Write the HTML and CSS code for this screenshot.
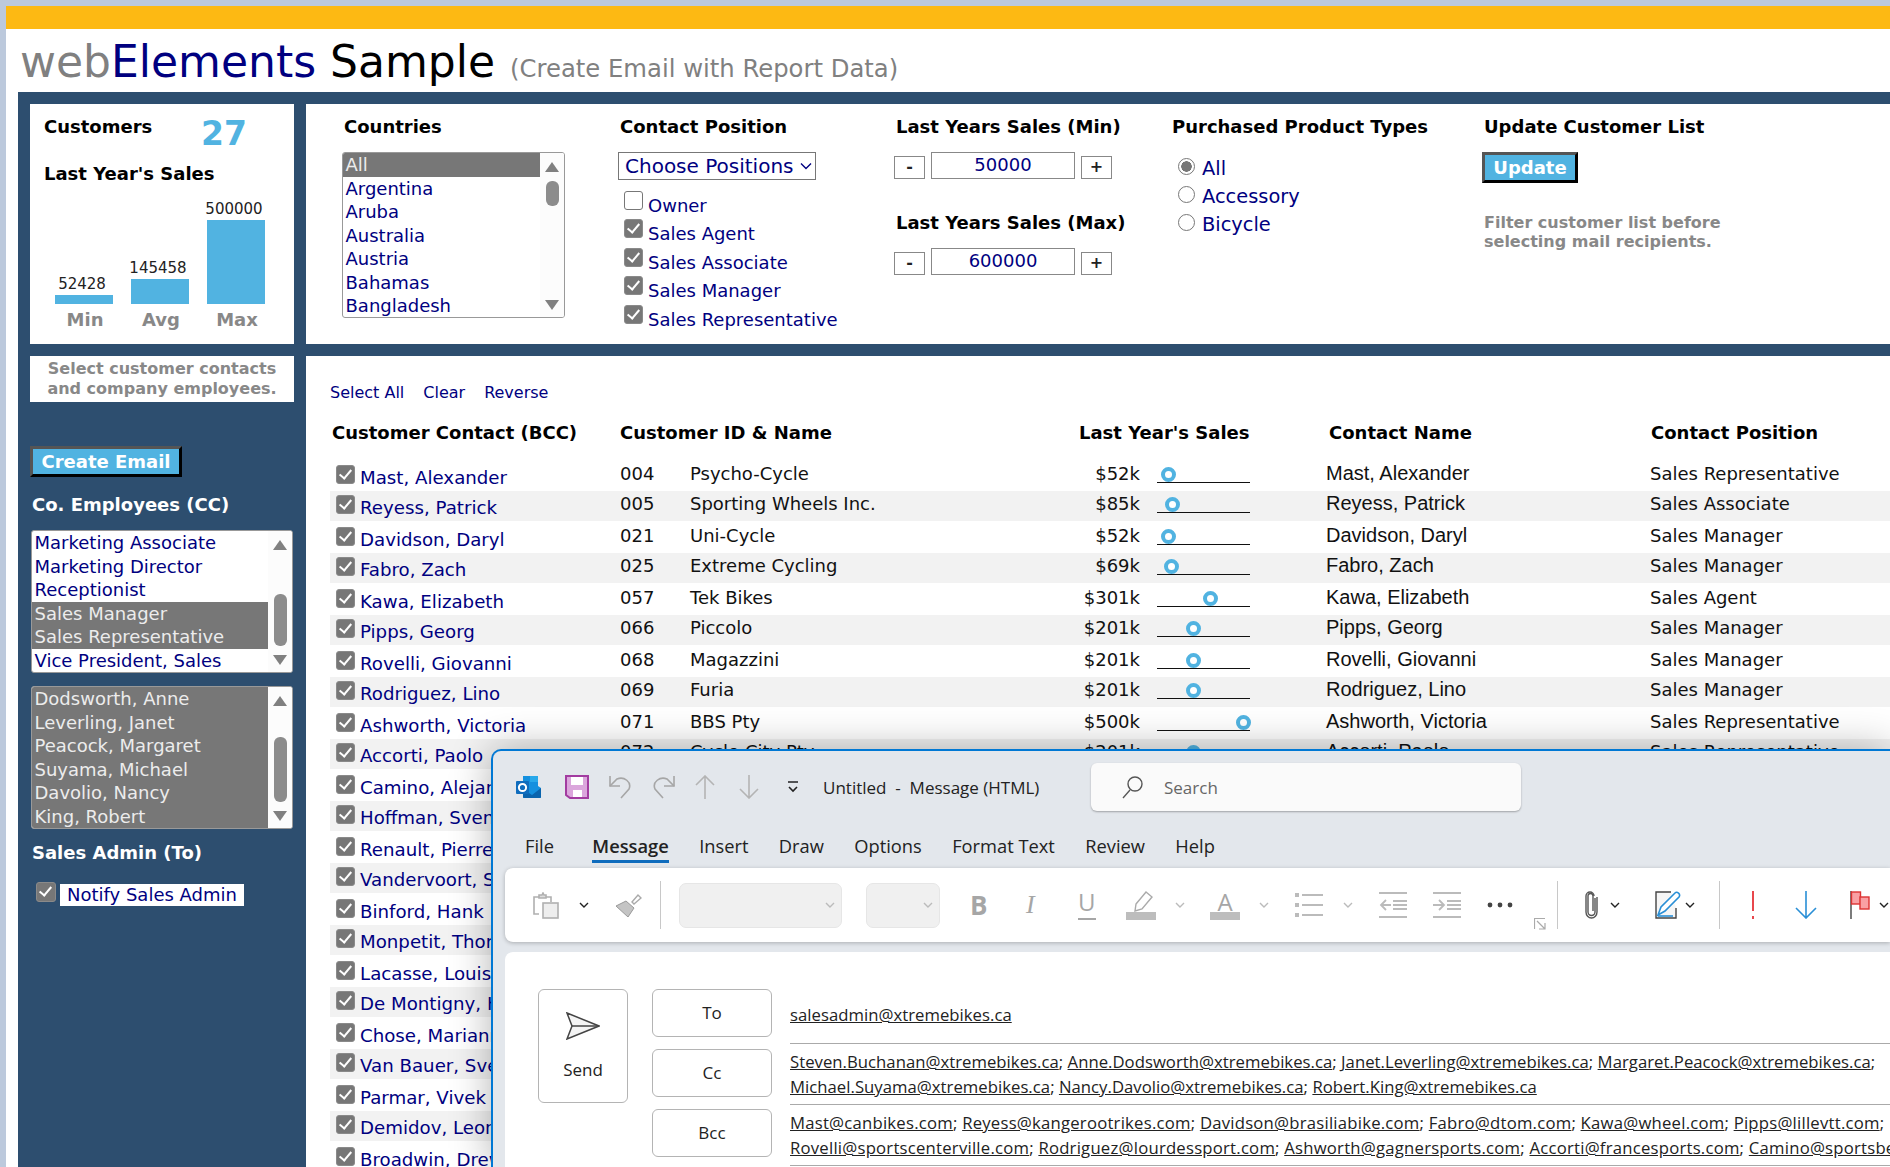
FILE: index.html
```html
<!DOCTYPE html>
<html lang="en">

<head>
  <meta charset="UTF-8">
  <title>webElements Sample</title>
  <link rel="stylesheet" href="styles.css">
</head>

<body>
  <div class="page">
    <div class="topbar"></div>
    <div class="title-row">
      <h1 class="title"><span class="t-grey">web</span><span class="t-navy">Elements</span> Sample</h1>
      <span class="subtitle">(Create Email with Report Data)</span>
    </div>

    <div class="panel">
      <div class="card summary">
        <div class="summary-top">
          <h2 class="hd hd-cust">Customers</h2>
          <div class="big-num">27</div>
        </div>
        <h2 class="hd hd-sales">Last Year's Sales</h2>
        <div class="chart">
          <div class="col"><div class="val">52428</div><div class="bar bar-min"></div><div class="lab">Min</div></div>
          <div class="col"><div class="val">145458</div><div class="bar bar-avg"></div><div class="lab">Avg</div></div>
          <div class="col"><div class="val">500000</div><div class="bar bar-max"></div><div class="lab">Max</div></div>
        </div>
      </div>

      <div class="card filters">
        <div class="f-col">
          <h2 class="hd hd-in">Countries</h2>
          <div class="listbox lb-countries">
            <div class="opts">
              <div class="opt sel">All</div>
              <div class="opt">Argentina</div>
              <div class="opt">Aruba</div>
              <div class="opt">Australia</div>
              <div class="opt">Austria</div>
              <div class="opt">Bahamas</div>
              <div class="opt">Bangladesh</div>
            </div>
            <div class="scroll"><i class="arr-up"></i><i class="thumb thumb-a"></i><i class="arr-down"></i></div>
          </div>
        </div>
        <div class="f-col">
          <h2 class="hd hd-in">Contact Position</h2>
          <div class="dropdown">Choose Positions
            <svg width="12" height="8" viewBox="0 0 12 8"><path d="M1 1.5l5 5 5-5" fill="none" stroke="#000080" stroke-width="1.4"/></svg>
          </div>
          <div class="checks">
            <label class="chk-row"><input type="checkbox" class="box"><span>Owner</span></label>
            <label class="chk-row"><input type="checkbox" class="box" checked><span>Sales Agent</span></label>
            <label class="chk-row"><input type="checkbox" class="box" checked><span>Sales Associate</span></label>
            <label class="chk-row"><input type="checkbox" class="box" checked><span>Sales Manager</span></label>
            <label class="chk-row"><input type="checkbox" class="box" checked><span>Sales Representative</span></label>
          </div>
        </div>
        <div class="f-col">
          <h2 class="hd hd-in">Last Years Sales (Min)</h2>
          <div class="stepper"><div class="st-btn">-</div><div class="st-val">50000</div><div class="st-btn">+</div></div>
          <h2 class="hd hd-in hd-max">Last Years Sales (Max)</h2>
          <div class="stepper"><div class="st-btn">-</div><div class="st-val">600000</div><div class="st-btn">+</div></div>
        </div>
        <div class="f-col">
          <h2 class="hd">Purchased Product Types</h2>
          <div class="radios">
            <label class="rad-row"><input type="radio" name="ptype" class="rad" checked><span>All</span></label>
            <label class="rad-row"><input type="radio" name="ptype" class="rad"><span>Accessory</span></label>
            <label class="rad-row"><input type="radio" name="ptype" class="rad"><span>Bicycle</span></label>
          </div>
        </div>
        <div class="f-col">
          <h2 class="hd hd-in">Update Customer List</h2>
          <div class="btn btn-update">Update</div>
          <p class="hint">Filter customer list before<br>selecting mail recipients.</p>
        </div>
      </div>

      <div class="sidebar">
        <p class="note">Select customer contacts<br>and company employees.</p>
        <div class="btn btn-create">Create Email</div>
        <h2 class="hd hd-white hd-emp">Co. Employees (CC)</h2>
        <div class="listbox lb-side">
          <div class="opts">
            <div class="opt">Marketing Associate</div>
            <div class="opt">Marketing Director</div>
            <div class="opt">Receptionist</div>
            <div class="opt sel">Sales Manager</div>
            <div class="opt sel">Sales Representative</div>
            <div class="opt">Vice President, Sales</div>
          </div>
          <div class="scroll"><i class="arr-up"></i><i class="thumb thumb-b"></i><i class="arr-down"></i></div>
        </div>
        <div class="listbox lb-side lb-second">
          <div class="opts">
            <div class="opt sel">Dodsworth, Anne</div>
            <div class="opt sel">Leverling, Janet</div>
            <div class="opt sel">Peacock, Margaret</div>
            <div class="opt sel">Suyama, Michael</div>
            <div class="opt sel">Davolio, Nancy</div>
            <div class="opt sel">King, Robert</div>
          </div>
          <div class="scroll"><i class="arr-up"></i><i class="thumb thumb-c"></i><i class="arr-down"></i></div>
        </div>
        <h2 class="hd hd-white hd-admin">Sales Admin (To)</h2>
        <label class="notify"><input type="checkbox" class="box" checked><span>Notify Sales Admin</span></label>
      </div>

      <div class="main">
        <div class="links"><a>Select All</a><a>Clear</a><a>Reverse</a></div>
        <div class="thead">
          <h2 class="hd">Customer Contact (BCC)</h2>
          <h2 class="hd">Customer ID &amp; Name</h2>
          <h2 class="hd">Last Year's Sales</h2>
          <h2 class="hd">Contact Name</h2>
          <h2 class="hd">Contact Position</h2>
        </div>
        <div id="list">
          <div class="row"><input type="checkbox" class="box" checked><div class="c-name">Mast, Alexander</div><div>004</div><div>Psycho-Cycle</div><div class="c-sales">$52k</div><div class="slider"><i style="left:3.5px"></i></div><div class="c-contact">Mast, Alexander</div><div>Sales Representative</div></div>
          <div class="row"><input type="checkbox" class="box" checked><div class="c-name">Reyess, Patrick</div><div>005</div><div>Sporting Wheels Inc.</div><div class="c-sales">$85k</div><div class="slider"><i style="left:7.5px"></i></div><div class="c-contact">Reyess, Patrick</div><div>Sales Associate</div></div>
          <div class="row"><input type="checkbox" class="box" checked><div class="c-name">Davidson, Daryl</div><div>021</div><div>Uni-Cycle</div><div class="c-sales">$52k</div><div class="slider"><i style="left:3.5px"></i></div><div class="c-contact">Davidson, Daryl</div><div>Sales Manager</div></div>
          <div class="row"><input type="checkbox" class="box" checked><div class="c-name">Fabro, Zach</div><div>025</div><div>Extreme Cycling</div><div class="c-sales">$69k</div><div class="slider"><i style="left:6.5px"></i></div><div class="c-contact">Fabro, Zach</div><div>Sales Manager</div></div>
          <div class="row"><input type="checkbox" class="box" checked><div class="c-name">Kawa, Elizabeth</div><div>057</div><div>Tek Bikes</div><div class="c-sales">$301k</div><div class="slider"><i style="left:45.5px"></i></div><div class="c-contact">Kawa, Elizabeth</div><div>Sales Agent</div></div>
          <div class="row"><input type="checkbox" class="box" checked><div class="c-name">Pipps, Georg</div><div>066</div><div>Piccolo</div><div class="c-sales">$201k</div><div class="slider"><i style="left:29px"></i></div><div class="c-contact">Pipps, Georg</div><div>Sales Manager</div></div>
          <div class="row"><input type="checkbox" class="box" checked><div class="c-name">Rovelli, Giovanni</div><div>068</div><div>Magazzini</div><div class="c-sales">$201k</div><div class="slider"><i style="left:29px"></i></div><div class="c-contact">Rovelli, Giovanni</div><div>Sales Manager</div></div>
          <div class="row"><input type="checkbox" class="box" checked><div class="c-name">Rodriguez, Lino</div><div>069</div><div>Furia</div><div class="c-sales">$201k</div><div class="slider"><i style="left:29px"></i></div><div class="c-contact">Rodriguez, Lino</div><div>Sales Manager</div></div>
          <div class="row"><input type="checkbox" class="box" checked><div class="c-name">Ashworth, Victoria</div><div>071</div><div>BBS Pty</div><div class="c-sales">$500k</div><div class="slider"><i style="left:78.5px"></i></div><div class="c-contact">Ashworth, Victoria</div><div>Sales Representative</div></div>
          <div class="row"><input type="checkbox" class="box" checked><div class="c-name">Accorti, Paolo</div><div>072</div><div>Cycle City Pty</div><div class="c-sales">$201k</div><div class="slider"><i style="left:29px"></i></div><div class="c-contact">Accorti, Paolo</div><div>Sales Representative</div></div>
          <div class="row"><input type="checkbox" class="box" checked><div class="c-name">Camino, Alejandra</div></div>
          <div class="row"><input type="checkbox" class="box" checked><div class="c-name">Hoffman, Sven</div></div>
          <div class="row"><input type="checkbox" class="box" checked><div class="c-name">Renault, Pierre</div></div>
          <div class="row"><input type="checkbox" class="box" checked><div class="c-name">Vandervoort, Sam</div></div>
          <div class="row"><input type="checkbox" class="box" checked><div class="c-name">Binford, Hank</div></div>
          <div class="row"><input type="checkbox" class="box" checked><div class="c-name">Monpetit, Thomas</div></div>
          <div class="row"><input type="checkbox" class="box" checked><div class="c-name">Lacasse, Louis</div></div>
          <div class="row"><input type="checkbox" class="box" checked><div class="c-name">De Montigny, Henri</div></div>
          <div class="row"><input type="checkbox" class="box" checked><div class="c-name">Chose, Marianne</div></div>
          <div class="row"><input type="checkbox" class="box" checked><div class="c-name">Van Bauer, Sven</div></div>
          <div class="row"><input type="checkbox" class="box" checked><div class="c-name">Parmar, Vivek</div></div>
          <div class="row"><input type="checkbox" class="box" checked><div class="c-name">Demidov, Leon</div></div>
          <div class="row"><input type="checkbox" class="box" checked><div class="c-name">Broadwin, Drew</div></div>
        </div>
      </div>
    </div>
  </div>

  <!-- mail window sits on top of the page -->
  <div class="mail">
    <div class="titlebar">
      <svg class="ic-logo" width="25" height="24" viewBox="0 0 25 24"><path d="M7 1h14a1 1 0 0 1 1 1v9l3 2v9a1 1 0 0 1-1 1H8a1 1 0 0 1-1-1z" fill="#1490df"/><path d="M14 1h8v6h-8z" fill="#28a8ea"/><path d="M7 14l9 6 9-7v9a1 1 0 0 1-1 1H8a1 1 0 0 1-1-1z" fill="#0a64ad"/><rect x="0" y="6" width="13" height="13" rx="1" fill="#0f6cbd"/><circle cx="6.5" cy="12.5" r="3.6" fill="none" stroke="#fff" stroke-width="2"/></svg>
      <svg class="ic-save" width="24" height="24" viewBox="0 0 24 24"><path d="M1 1h22v22H5l-4-3z" fill="#dba6dc" stroke="#a23ca0" stroke-width="2"/><rect x="6" y="2" width="12" height="8" fill="#fff"/><rect x="8" y="15" width="9" height="7" fill="#fff"/></svg>
      <svg class="ic-undo" width="24" height="24" viewBox="0 0 24 24" fill="none" stroke="#a6a6a6" stroke-width="1.6"><path d="M2 1v10h10"/><path d="M2 11L9 4c7-3 15 3 12 10l-8 9"/></svg>
      <svg class="ic-redo" width="24" height="24" viewBox="0 0 24 24" fill="none" stroke="#a6a6a6" stroke-width="1.6"><path d="M22 1v10H12"/><path d="M22 11l-7-7C8 1 0 7 3 14l8 9"/></svg>
      <svg class="ic-up" width="24" height="24" viewBox="0 0 24 24" fill="none" stroke="#b4b4b4" stroke-width="1.6"><path d="M12 24V1M3 10l9-9 9 9"/></svg>
      <svg class="ic-down" width="24" height="24" viewBox="0 0 24 24" fill="none" stroke="#b4b4b4" stroke-width="1.6"><path d="M12 0v23M3 14l9 9 9-9"/></svg>
      <svg class="ic-more" width="14" height="14" viewBox="0 0 14 14" fill="none" stroke="#222" stroke-width="1.6"><path d="M2 2h10M3 7l4 4 4-4"/></svg>
      <div class="win-title">Untitled  -  Message (HTML)</div>
      <div class="search">
        <svg width="22" height="24" viewBox="0 0 22 24" fill="none" stroke="#555" stroke-width="1.4"><circle cx="13" cy="9" r="7"/><path d="M8 15l-7 8"/></svg>
        <span>Search</span>
      </div>
    </div>

    <div class="tabs">
      <span class="tab">File</span>
      <span class="tab active">Message</span>
      <span class="tab">Insert</span>
      <span class="tab">Draw</span>
      <span class="tab">Options</span>
      <span class="tab">Format Text</span>
      <span class="tab">Review</span>
      <span class="tab">Help</span>
    </div>

    <div class="ribbon">
      <svg width="26" height="27" viewBox="0 0 26 27" fill="none" stroke="#b0b0b0" stroke-width="1.6"><path d="M6 22H1V5h5M13 5h5v5"/><path d="M6 6V3h3l1-2 1 2h2v3z" fill="#ddd"/><rect x="10" y="11" width="15" height="15" fill="#eee"/></svg>
      <svg class="chev" width="10" height="7" viewBox="0 0 10 7"><path d="M1 1l4 4 4-4" fill="none" stroke="#222" stroke-width="1.4"/></svg>
      <svg width="27" height="24" viewBox="0 0 27 24"><path d="M17 9l6-7 3 3-7 6z" fill="none" stroke="#aaa" stroke-width="1.4"/><path d="M1 13l10-5 8 7-6 9z" fill="#c4c4c4" stroke="#999"/></svg>
      <div class="rb-sep"></div>
      <div class="rb-field rb-font"><svg class="chev" width="10" height="7" viewBox="0 0 10 7"><path d="M1 1l4 4 4-4" fill="none" stroke="#bbb" stroke-width="1.4"/></svg></div>
      <div class="rb-field rb-size"><svg class="chev" width="10" height="7" viewBox="0 0 10 7"><path d="M1 1l4 4 4-4" fill="none" stroke="#bbb" stroke-width="1.4"/></svg></div>
      <span class="gl gl-b">B</span>
      <span class="gl gl-i">I</span>
      <span class="gl gl-u">U</span>
      <svg width="30" height="29" viewBox="0 0 30 29"><path d="M10 13L20 1l6 5-10 12-7 2z" fill="none" stroke="#aaa" stroke-width="1.4"/><rect y="21" width="30" height="8" fill="#bdbdbd"/></svg>
      <svg class="chev" width="10" height="7" viewBox="0 0 10 7"><path d="M1 1l4 4 4-4" fill="none" stroke="#bbb" stroke-width="1.4"/></svg>
      <span class="gl gl-a">A</span>
      <svg class="chev" width="10" height="7" viewBox="0 0 10 7"><path d="M1 1l4 4 4-4" fill="none" stroke="#bbb" stroke-width="1.4"/></svg>
      <svg width="28" height="24" viewBox="0 0 28 24" fill="#bbb"><rect width="4" height="4"/><rect y="10" width="4" height="4"/><rect y="20" width="4" height="4"/><rect x="7" y="1" width="21" height="2"/><rect x="7" y="11" width="21" height="2"/><rect x="7" y="21" width="21" height="2"/></svg>
      <svg class="chev" width="10" height="7" viewBox="0 0 10 7"><path d="M1 1l4 4 4-4" fill="none" stroke="#bbb" stroke-width="1.4"/></svg>
      <svg width="28" height="26" viewBox="0 0 28 26" fill="none" stroke="#bbb" stroke-width="1.8"><path d="M0 1h28M14 9h14M14 13h14M14 17h14M0 25h28M12 13H2M7 8l-5 5 5 5"/></svg>
      <svg width="28" height="26" viewBox="0 0 28 26" fill="none" stroke="#bbb" stroke-width="1.8"><path d="M0 1h28M14 9h14M14 13h14M14 17h14M0 25h28M0 13h10M6 8l5 5-5 5"/></svg>
      <svg width="26" height="6" viewBox="0 0 26 6" fill="#444"><circle cx="3" cy="3" r="2.4"/><circle cx="13" cy="3" r="2.4"/><circle cx="23" cy="3" r="2.4"/></svg>
      <div class="rb-sep"></div>
      <svg width="13" height="28" viewBox="0 0 13 28" fill="none" stroke="#555" stroke-width="1.4"><path d="M10 7v14a3.5 3.5 0 0 1-7 0V5a2.5 2.5 0 0 1 5 0v15"/><path d="M12 6v15a5.5 6 0 0 1-11 0V5a4 4 0 0 1 8 0"/></svg>
      <svg class="chev" width="10" height="7" viewBox="0 0 10 7"><path d="M1 1l4 4 4-4" fill="none" stroke="#222" stroke-width="1.4"/></svg>
      <svg width="27" height="28" viewBox="0 0 27 28"><path d="M21 17v10H1V1h15" fill="#f6f6f6" stroke="#444" stroke-width="1.4"/><path d="M3 24l3-8L20 2c2-2 6 1 4 4L10 20z" fill="#fff" stroke="#2a8fd6" stroke-width="1.6"/><path d="M3 25h15" stroke="#2a8fd6" stroke-width="1.6"/></svg>
      <svg class="chev" width="10" height="7" viewBox="0 0 10 7"><path d="M1 1l4 4 4-4" fill="none" stroke="#222" stroke-width="1.4"/></svg>
      <div class="rb-sep"></div>
      <svg class="ic-excl" width="4" height="28" viewBox="0 0 4 28" fill="#e8474c"><rect x="1" width="2" height="20"/><rect x="1" y="25" width="2" height="3"/></svg>
      <svg width="22" height="28" viewBox="0 0 22 28" fill="none" stroke="#2a8fd6" stroke-width="1.6"><path d="M11 0v27M1 17l10 10 10-10"/></svg>
      <svg width="20" height="28" viewBox="0 0 20 28"><path d="M1 0v28" stroke="#444" stroke-width="1.4"/><rect x="1.5" y="1" width="9" height="12" fill="#f9a0a4" stroke="#d33" stroke-width="1.4"/><rect x="10" y="6" width="9" height="12" fill="#f9a0a4" stroke="#d33" stroke-width="1.4"/></svg>
      <svg class="chev" width="10" height="7" viewBox="0 0 10 7"><path d="M1 1l4 4 4-4" fill="none" stroke="#222" stroke-width="1.4"/></svg>
      <svg class="rb-corner" width="12" height="12" viewBox="0 0 12 12" fill="none" stroke="#aaa" stroke-width="1.2"><path d="M.5 11V.5H11M3 3l8 8M11 5v6H5"/></svg>
    </div>

    <div class="compose">
      <div class="send-btn">
        <svg width="34" height="28" viewBox="0 0 34 28" fill="none" stroke="#444" stroke-width="1.5"><path d="M1 1l32 13L1 27l5-13z" fill="#f4f4f4"/><path d="M6 14h27"/></svg>
        <span>Send</span>
      </div>
      <div class="addr-btns">
        <div class="addr-btn">To</div>
        <div class="addr-btn">Cc</div>
        <div class="addr-btn">Bcc</div>
      </div>
      <div class="fields">
        <div class="field f-to"><a>salesadmin@xtremebikes.ca</a></div>
        <div class="field">
          <div class="f-line"><a>Steven.Buchanan@xtremebikes.ca</a>; <a>Anne.Dodsworth@xtremebikes.ca</a>; <a>Janet.Leverling@xtremebikes.ca</a>; <a>Margaret.Peacock@xtremebikes.ca</a>;</div>
          <div class="f-line"><a>Michael.Suyama@xtremebikes.ca</a>; <a>Nancy.Davolio@xtremebikes.ca</a>; <a>Robert.King@xtremebikes.ca</a></div>
        </div>
        <div class="field f-bcc">
          <div class="f-line"><a>Mast@canbikes.com</a>; <a>Reyess@kangerootrikes.com</a>; <a>Davidson@brasiliabike.com</a>; <a>Fabro@dtom.com</a>; <a>Kawa@wheel.com</a>; <a>Pipps@lillevtt.com</a>;</div>
          <div class="f-line"><a>Rovelli@sportscenterville.com</a>; <a>Rodriguez@lourdessport.com</a>; <a>Ashworth@gagnersports.com</a>; <a>Accorti@francesports.com</a>; <a>Camino@sportsbernard.com</a>;</div>
        </div>
      </div>
    </div>
  </div>
</body>

</html>
```

FILE: styles.css
```css
body {
  --navy: #2d4e6f;
  --blue: #51b3e1;
  --link: #000080;
  --grey: #777;
  margin: 0;
  height: 1167px;
  overflow: hidden;
  background-color: #bcc9dc;
  font-family: "DejaVu Sans", sans-serif;
  font-size: 18px;
  color: var(--link);
}

.page {
  margin: 6px 0 0 6px;
  height: 1161px;
  background-color: #fff;
  display: flex;
  flex-direction: column;
}

.topbar {
  flex: none;
  height: 23px;
  background-color: #fdb913;
}

.title-row {
  flex: none;
  height: 63px;
  box-sizing: border-box;
  padding: 3px 0 0 14px;
  display: flex;
  align-items: baseline;
  gap: 15px;
  line-height: 60px;
}

.title {
  margin: 0;
  font-size: 44px;
  font-weight: normal;
  color: #000;
}

.t-grey { color: #808080; }
.t-navy { color: var(--link); }

.subtitle {
  font-size: 24.3px;
  color: #808080;
}

.panel {
  flex: 1;
  min-height: 0;
  overflow: hidden;
  margin-left: 12px;
  padding: 12px 0 0 12px;
  background-color: var(--navy);
  display: grid;
  grid-template-columns: 264px 1fr;
  grid-template-rows: 240px 1fr;
  gap: 12px;
}

.card {
  background-color: #fff;
}

.hd {
  margin: 0;
  font-size: 18px;
  line-height: 22px;
  font-weight: bold;
  color: #000;
}

.hd-white { color: #fff; }

/* customers card */
.summary {
  padding: 12px 0 0 14px;
}

.summary-top {
  display: flex;
  height: 47px;
}

.hd-cust { width: 157px; }

.big-num {
  font-size: 33px;
  font-weight: bold;
  line-height: 36px;
  color: var(--blue);
}

.chart {
  display: flex;
  align-items: flex-end;
  gap: 18px;
  height: 146px;
  margin-left: 11px;
}

.col {
  width: 58px;
  text-align: center;
}

.val {
  margin-left: -4px;
  font-size: 15px;
  line-height: 18px;
  color: #222;
  white-space: nowrap;
}

.bar {
  margin-top: 2px;
  background-color: var(--blue);
}

.bar-min { height: 9px; }
.bar-avg { height: 25px; }
.bar-max { height: 84px; }

.lab {
  margin-top: 5px;
  padding-left: 2px;
  font-size: 18px;
  line-height: 22px;
  font-weight: bold;
  color: #888;
}

/* filter card */
.filters {
  padding: 12px 0 0 36px;
  display: grid;
  grid-template-columns: 276px 276px 278px 310px 1fr;
}

.hd-in { margin-left: 2px; }

.listbox {
  display: flex;
  border: 1px solid #999;
  border-radius: 3px;
  background-color: #fff;
  box-sizing: border-box;
  overflow: hidden;
}

.lb-countries {
  margin-top: 14px;
  width: 223px;
  height: 166px;
}

.opts {
  flex: 1;
}

.opt {
  height: 23.5px;
  line-height: 23px;
  padding-left: 2.5px;
  white-space: nowrap;
}

.opt.sel {
  background-color: var(--grey);
  color: #ececec;
}

.scroll {
  width: 24px;
  display: flex;
  flex-direction: column;
  align-items: center;
  padding-top: 9px;
  background-color: #fcfcfc;
}

.scroll i { display: block; }

.arr-up {
  border-left: 7.5px solid transparent;
  border-right: 7.5px solid transparent;
  border-bottom: 10px solid #808080;
}

.arr-down {
  margin-top: auto;
  margin-bottom: 7px;
  border-left: 7.5px solid transparent;
  border-right: 7.5px solid transparent;
  border-top: 10px solid #808080;
}

.thumb {
  width: 13px;
  border-radius: 6px;
  background-color: #8c8c8c;
}

.thumb-a { margin-top: 9px; height: 25px; }
.thumb-b { margin-top: 44px; height: 52px; }
.thumb-c { margin-top: 31px; height: 65px; }

.dropdown {
  margin-top: 14px;
  width: 198px;
  height: 28px;
  box-sizing: border-box;
  border: 1px solid #777;
  padding-left: 6px;
  display: flex;
  align-items: center;
  justify-content: space-between;
  padding-right: 3px;
  font-size: 20px;
  white-space: nowrap;
}

.checks {
  margin-top: 11px;
  margin-left: 6px;
}

.chk-row {
  display: flex;
  height: 28.4px;
  gap: 5px;
  white-space: nowrap;
}

.chk-row span {
  margin-top: 4px;
  line-height: 22px;
}

.box {
  appearance: none;
  margin: 0;
  width: 19px;
  height: 19px;
  flex: none;
  position: relative;
  box-sizing: border-box;
  border: 1px solid #777;
  border-radius: 3px;
  background-color: #fff;
}

.box:checked {
  background-color: var(--grey);
  border-color: #8a8a8a;
}

.box:checked::after {
  content: "";
  position: absolute;
  left: 5px;
  top: 1px;
  width: 5px;
  height: 10px;
  border: solid #fff;
  border-width: 0 2.5px 2.5px 0;
  transform: rotate(40deg);
}

.stepper {
  margin-top: 14px;
  display: flex;
  align-items: flex-end;
  gap: 6px;
}

.st-btn {
  width: 31px;
  height: 23px;
  box-sizing: border-box;
  border: 1px solid #888;
  text-align: center;
  line-height: 19px;
  font-weight: bold;
  font-size: 16px;
  color: #222;
}

.st-val {
  width: 144px;
  height: 27px;
  box-sizing: border-box;
  border: 1px solid #888;
  text-align: center;
  line-height: 23px;
}

.hd-max { margin-top: 33px; }

.radios {
  margin-top: 15px;
  margin-left: 6px;
}

.rad-row {
  display: flex;
  gap: 7px;
  height: 28px;
  font-size: 19.4px;
  white-space: nowrap;
}

.rad-row span {
  margin-top: 4px;
  line-height: 24px;
}

.rad {
  appearance: none;
  margin: 5px 0 0;
  width: 17px;
  height: 17px;
  flex: none;
  box-sizing: border-box;
  border: 1px solid #777;
  border-radius: 50%;
  background-color: #fff;
}

.rad:checked {
  background: radial-gradient(circle, #777 0 5px, #fff 5.5px);
}

.btn {
  box-sizing: border-box;
  background-color: var(--blue);
  border: 3px solid #000;
  border-top-color: #555;
  border-left-color: #555;
  color: #fff;
  font-weight: bold;
  text-align: center;
  line-height: 25px;
}

.btn-update {
  margin-top: 14px;
  width: 96px;
  height: 31px;
}

.hint {
  margin: 30px 0 0 2px;
  font-size: 16px;
  font-weight: bold;
  line-height: 19px;
  color: #888;
}

/* sidebar */
.note {
  margin: 0;
  height: 46px;
  background-color: #fff;
  text-align: center;
  font-size: 16px;
  font-weight: bold;
  line-height: 20px;
  padding-top: 3px;
  box-sizing: border-box;
  color: #888;
}

.btn-create {
  margin-top: 44px;
  width: 152px;
  height: 31px;
}

.hd-emp {
  margin: 17px 0 14px 2px;
}

.lb-side {
  margin-left: 1px;
  width: 262px;
  height: 143px;
}

.lb-second { margin-top: 13px; }

.hd-admin { margin: 13px 0 18px 2px; }

.notify {
  display: flex;
  gap: 4px;
  margin-left: 6px;
}

.notify .box {
  width: 20px;
  height: 20px;
}

.notify span {
  margin-top: 2px;
  padding: 0 7px;
  background-color: #fff;
  line-height: 22px;
  white-space: nowrap;
}

/* customer table */
.main {
  background-color: #fff;
  padding-left: 24px;
  overflow: hidden;
}

.links {
  margin-top: 26px;
  display: flex;
  gap: 19px;
  font-size: 16px;
  line-height: 22px;
}

.thead {
  margin-top: 18px;
  padding-left: 2px;
  display: grid;
  grid-template-columns: 288px 459px 250px 322px 1fr;
}

#list {
  margin-top: 15px;
}

.row {
  height: 30px;
  display: grid;
  grid-template-columns: 31px 259px 70px 300px 150px 187px 323px 1fr;
  line-height: 22px;
  white-space: nowrap;
  color: #111;
}

.row:nth-child(odd) {
  height: 32px;
  padding-top: 2px;
  box-sizing: border-box;
}

.row:nth-child(even) {
  background-color: #f2f2f2;
}

.row > div {
  padding-top: 2px;
}

.row > .box {
  margin: 4px 0 0 6px;
}

.row > .c-name {
  margin-left: -1px;
  padding-top: 6px;
  font-size: 18.2px;
  color: var(--link);
}

.c-sales {
  text-align: right;
}

.row > .c-contact {
  margin-left: -1px;
  padding-top: 1px;
  font-family: "Liberation Sans", sans-serif;
  font-size: 20px;
}

.row > .slider {
  position: relative;
  margin-left: 17px;
  height: 21px;
  width: 93px;
  padding: 0;
  border-bottom: 1px solid #111;
}

.slider i {
  position: absolute;
  top: 6px;
  width: 15px;
  height: 15px;
  box-sizing: border-box;
  border: 4px solid var(--blue);
  border-radius: 50%;
  background-color: #fff;
}

/* mail window */
.mail {
  position: absolute;
  left: 491px;
  top: 749px;
  right: 0;
  bottom: 0;
  overflow: hidden;
  box-sizing: border-box;
  border: solid #0078d4;
  border-width: 2px 0 0 2px;
  border-top-left-radius: 10px;
  background-color: #e3e7ec;
  box-shadow: 0 0 40px rgba(0, 0, 0, 0.3);
  font-family: "Open Sans", sans-serif;
  font-size: 17px;
  color: #222;
}

.titlebar {
  height: 48px;
  margin-top: 12px;
  padding-left: 23px;
  display: flex;
  align-items: center;
}

.ic-save { margin-left: 24px; }
.ic-undo { margin-left: 19px; }
.ic-redo { margin-left: 20px; }
.ic-up { margin-left: 17px; }
.ic-down { margin-left: 20px; }
.ic-more { margin-left: 25px; }

.win-title {
  margin-left: 23px;
  width: 268px;
  white-space: pre;
}

.search {
  width: 430px;
  height: 48px;
  box-sizing: border-box;
  padding-left: 31px;
  display: flex;
  align-items: center;
  gap: 20px;
  background-color: #fafafa;
  border-radius: 6px;
  box-shadow: 0 1px 2px rgba(0, 0, 0, 0.3);
  color: #666;
}

.tabs {
  height: 57px;
  padding: 22px 0 0 32px;
  box-sizing: border-box;
  display: flex;
  gap: 30.4px;
  font-size: 18.3px;
}

.tab {
  height: 27px;
  line-height: 26px;
}

.tab.active {
  margin-left: 8px;
  font-weight: 600;
  border-bottom: 3px solid #0f6cbd;
}

.ribbon {
  position: relative;
  height: 74px;
  margin-left: 12px;
  padding-left: 28px;
  display: grid;
  grid-template-columns: 46px 36px 45px 19px 187px 104px 56px 52px 48px 49px 35px 49px 36px 48px 36px 54px 54px 70px 28px 25px 45px 30px 34px 26px 50px 55px 29px 1fr;
  align-items: center;
  background-color: #fff;
  border-radius: 8px 0 0 8px;
  box-shadow: 0 1px 4px rgba(0, 0, 0, 0.25);
}

.rb-sep {
  width: 1px;
  height: 48px;
  background-color: #c8c8c8;
}

.rb-field {
  height: 45px;
  box-sizing: border-box;
  padding-right: 6px;
  display: flex;
  align-items: center;
  justify-content: flex-end;
  background-color: #f0f0f0;
  border: 1px solid #e6e6e6;
  border-radius: 7px;
}

.rb-font { width: 163px; }
.rb-size { width: 74px; }

.gl {
  color: #a6a6a6;
  line-height: 30px;
  font-size: 26px;
}

.gl-b { font-weight: bold; }

.gl-i {
  font-family: "Liberation Serif", serif;
  font-style: italic;
}

.gl-u {
  width: 18px;
  height: 27px;
  line-height: 22px;
  font-size: 24px;
  border-bottom: 2px solid #a6a6a6;
}

.gl-a {
  width: 30px;
  height: 29px;
  line-height: 22px;
  font-size: 24px;
  text-align: center;
  border-bottom: 8px solid #bdbdbd;
  box-sizing: border-box;
}

.ic-excl { margin-left: 6px; }

.rb-corner {
  position: absolute;
  left: 1029px;
  top: 50px;
}

.compose {
  height: 230px;
  margin: 10px 0 0 12px;
  padding: 37px 0 0 33px;
  display: flex;
  background-color: #fff;
  border-top-left-radius: 8px;
}

.send-btn {
  width: 90px;
  height: 114px;
  box-sizing: border-box;
  border: 1px solid #b4b4b4;
  border-radius: 6px;
  display: flex;
  flex-direction: column;
  align-items: center;
  padding-top: 22px;
  gap: 18px;
  flex: none;
}

.addr-btns {
  margin-left: 24px;
  display: flex;
  flex-direction: column;
  gap: 12px;
  flex: none;
}

.addr-btn {
  width: 120px;
  height: 48px;
  box-sizing: border-box;
  border: 1px solid #b4b4b4;
  border-radius: 6px;
  text-align: center;
  line-height: 46px;
}

.fields {
  margin-left: 18px;
  flex: 1;
  min-width: 0;
  font-size: 16.7px;
  letter-spacing: 0.03px;
  white-space: nowrap;
}

.fields a { text-decoration: underline; }

.field {
  padding-top: 5px;
  height: 55px;
  border-bottom: 1px solid #aaa;
  line-height: 25px;
}

.f-to {
  height: 41px;
  padding-top: 13px;
}

.f-bcc { letter-spacing: 0.23px; }
```
